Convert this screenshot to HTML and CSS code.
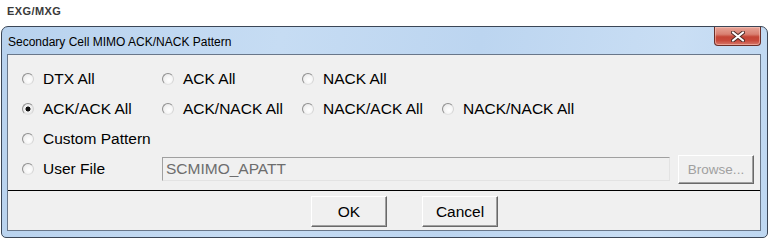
FILE: index.html
```html
<!DOCTYPE html>
<html lang="en">
<head>
    <meta charset="UTF-8">
    <title>Secondary Cell MIMO ACK/NACK Pattern</title>
    <link rel="stylesheet" href="styles.css">
</head>
<body>
    <div class="app-label">EXG/MXG</div>

    <div class="window">
        <div class="titlebar">
            <span class="title">Secondary Cell MIMO ACK/NACK Pattern</span>
            <button class="close-btn" aria-label="Close">
                <svg width="14" height="11" viewBox="0 0 14 11">
                    <path d="M2 1.5 L12 9.5 M12 1.5 L2 9.5" stroke="#4a2a26" stroke-width="4" stroke-linecap="round"/>
                    <path d="M2 1.5 L12 9.5 M12 1.5 L2 9.5" stroke="#ffffff" stroke-width="2.2" stroke-linecap="round"/>
                </svg>
            </button>
        </div>

        <div class="client">
            <div class="options">
                <div class="row">
                    <label class="option"><input type="radio" name="pattern"> DTX All</label>
                    <label class="option"><input type="radio" name="pattern"> ACK All</label>
                    <label class="option"><input type="radio" name="pattern"> NACK All</label>
                </div>
                <div class="row">
                    <label class="option"><input type="radio" name="pattern" checked> ACK/ACK All</label>
                    <label class="option"><input type="radio" name="pattern"> ACK/NACK All</label>
                    <label class="option"><input type="radio" name="pattern"> NACK/ACK All</label>
                    <label class="option"><input type="radio" name="pattern"> NACK/NACK All</label>
                </div>
                <div class="row">
                    <label class="option option-wide"><input type="radio" name="pattern"> Custom Pattern</label>
                </div>
                <div class="row">
                    <label class="option"><input type="radio" name="pattern"> User File</label>
                    <input type="text" class="file-input" value="SCMIMO_APATT" disabled>
                    <button class="btn btn-browse" disabled>Browse...</button>
                </div>
            </div>

            <div class="actions">
                <button class="btn btn-action">OK</button>
                <button class="btn btn-action">Cancel</button>
            </div>
        </div>
    </div>
</body>
</html>
```

FILE: styles.css
```css
body {
    margin: 0;
    background-color: #fff;
    font-family: "Liberation Sans", Arial, sans-serif;
}
.app-label {
    padding: 5px 7px 0;
    font-size: 11px;
    line-height: 13px;
    font-weight: bold;
    letter-spacing: 0.4px;
    color: #3a3a3a;
}
.window {
    box-sizing: border-box;
    width: 767px;
    height: 212px;
    margin: 8px 0 0 1px;
    padding: 0 6px 6px 5px;
    border: 1px solid #3b4656;
    border-radius: 7px 7px 5px 5px;
    background: linear-gradient(100deg, #b8d2ee 0%, #c6dcf3 35%, #bcd5f0 60%, #c9def4 85%, #bed7f1 100%);
}
.titlebar {
    display: flex;
    justify-content: space-between;
    align-items: flex-start;
    height: 27px;
}
.title {
    padding: 7px 0 0 1px;
    font-size: 12px;
    line-height: 16px;
    color: #000;
}
.close-btn {
    display: flex;
    align-items: center;
    justify-content: center;
    width: 47px;
    height: 19px;
    padding: 0;
    border: 1px solid #6a2e28;
    border-top: none;
    border-radius: 0 0 4px 4px;
    background: linear-gradient(to bottom, #e7a497 0%, #d98072 40%, #c44536 55%, #c8493b 75%, #d7786a 100%);
    box-shadow: inset 0 0 0 1px rgba(255, 210, 200, 0.5);
}
.client {
    box-sizing: border-box;
    height: 177px;
    border: 1px solid #69778a;
    background-color: #f0f0f0;
}
.options {
    padding: 9px 0 6px 14px;
    border-bottom: 1px solid #000;
}
.row {
    display: flex;
    align-items: center;
    height: 30px;
}
.option {
    display: flex;
    align-items: center;
    width: 140px;
    font-size: 15.5px;
    color: #000;
    white-space: nowrap;
}
.option-wide {
    width: auto;
}
.option input[type="radio"] {
    appearance: none;
    box-sizing: border-box;
    width: 12px;
    height: 12px;
    margin: 0 9px 0 0;
    border: 1px solid;
    border-color: #8f8f8f #d4d4d4 #e2e2e2 #8f8f8f;
    border-radius: 50%;
    background: radial-gradient(circle at 60% 60%, #ffffff 0%, #f4f4f4 50%, #dcdcdc 100%);
}
.option input[type="radio"]:checked {
    background: radial-gradient(circle at 50% 50%, #111 0, #111 2.2px, #f4f4f4 2.8px, #dcdcdc 100%);
}
.file-input {
    box-sizing: border-box;
    width: 508px;
    height: 24px;
    margin: 0;
    padding: 0 0 0 3px;
    border: 1px solid;
    border-color: #a0a0a0 #e3e3e3 #e3e3e3 #a0a0a0;
    background-color: #f0f0f0;
    font-family: "Liberation Sans", Arial, sans-serif;
    font-size: 15.5px;
    color: #6d6d6d;
}
.btn {
    box-sizing: border-box;
    margin: 0;
    padding: 0;
    border: 1px solid;
    border-color: #ffffff #696969 #696969 #ffffff;
    box-shadow: inset -1px -1px 0 #a0a0a0;
    background-color: #f0f0f0;
    font-family: "Liberation Sans", Arial, sans-serif;
    color: #000;
}
.btn-browse {
    width: 76px;
    height: 29px;
    margin-left: 8px;
    font-size: 13.5px;
    color: #a0a0a0;
}
.actions {
    display: flex;
    gap: 35px;
    padding: 5px 0 0 303px;
}
.btn-action {
    width: 76px;
    height: 31px;
    font-size: 15.5px;
}
```
